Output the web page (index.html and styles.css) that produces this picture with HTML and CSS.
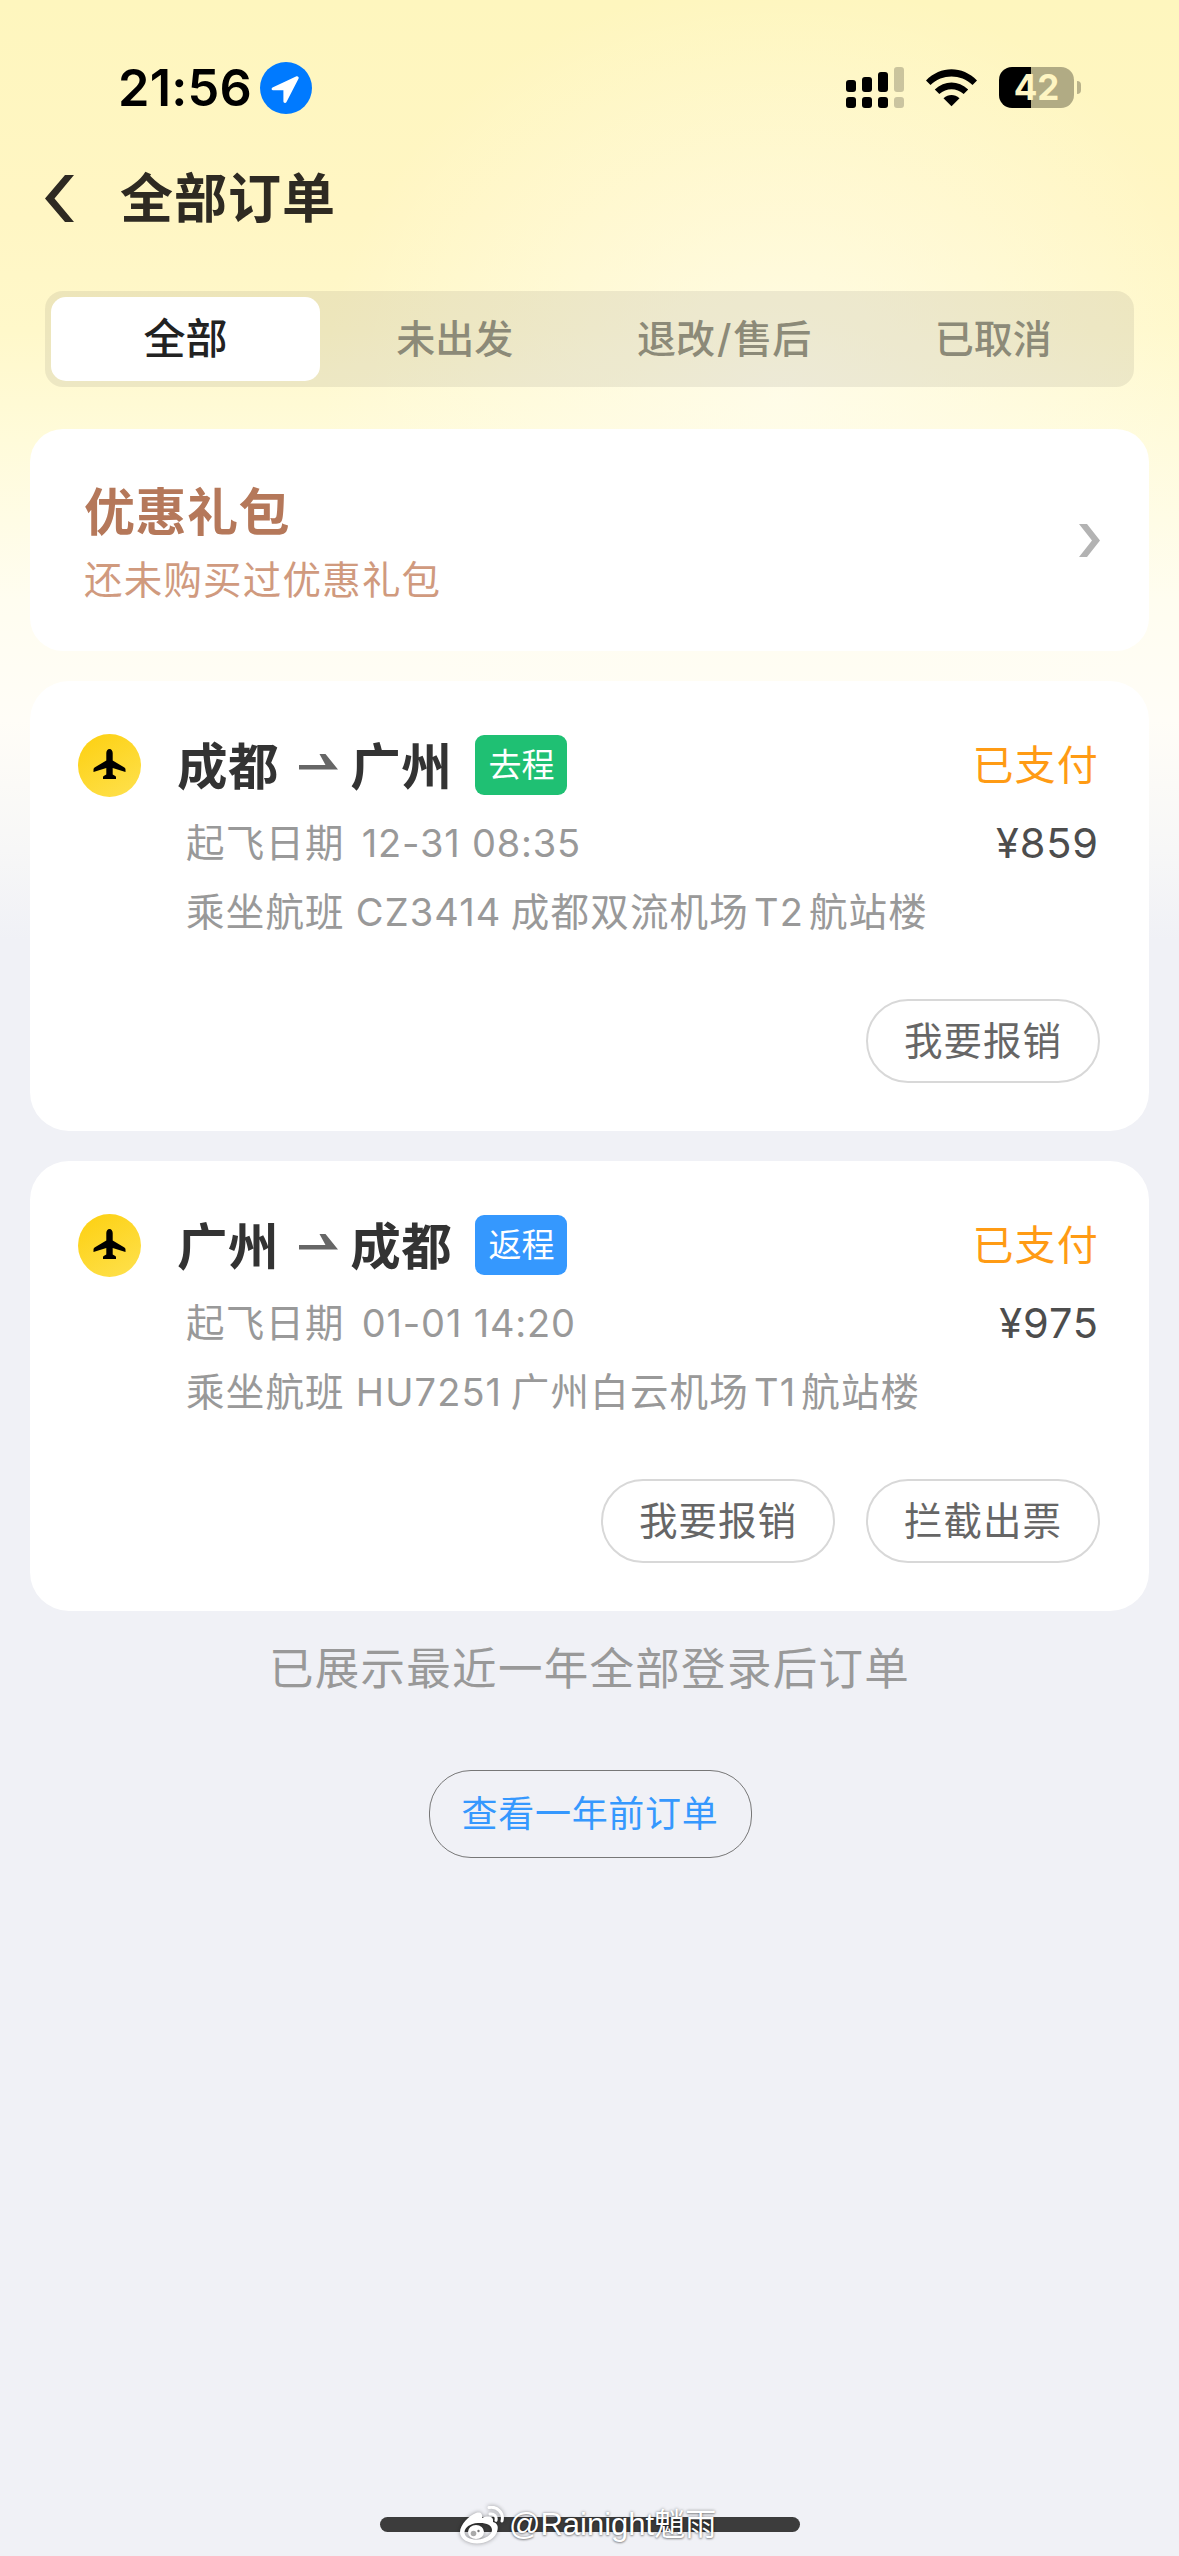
FILE: index.html
```html
<!DOCTYPE html>
<html lang="zh-CN">
<head>
<meta charset="utf-8">
<title>全部订单</title>
<link rel="stylesheet" href="styles.css">
</head>
<body>
<svg class="defs" width="0" height="0" aria-hidden="true">
  <defs>
    <linearGradient id="gold" x1="0.2" y1="0" x2="0.8" y2="1">
      <stop offset="0" stop-color="#fdd114"/><stop offset="1" stop-color="#fee04a"/>
    </linearGradient>
    <symbol id="plane" viewBox="0 0 63 63">
      <circle cx="31.5" cy="31.5" r="31.5" fill="url(#gold)"/>
      <path d="M31.5 15c1.900 0 3.200 1.800 3.200 4v7.500L46 33.300c1 .6 1.500 1.300 1.500 2.400v2.400l-12.800-4v6.400l2.600 1.500c.5.300.7.700.7 1.300V45H25v-1.700c0-.6.2-1 .7-1.300l2.600-1.500v-6.400l-12.800 4v-2.400c0-1.100.5-1.800 1.500-2.400l11.300-6.800V19c0-2.200 1.300-4 3.200-4z" fill="#000"/>
    </symbol>
    <symbol id="arrow" viewBox="0 0 39 16">
      <path d="M0 11h26.500L20.500 0h6L39 15.500H0z" fill="#666"/>
    </symbol>
  </defs>
</svg>
<div class="page">
  <header class="status-bar">
    <div class="clock">
      <span class="time">21:56</span>
      <svg class="location" viewBox="0 0 52 52"><circle cx="26" cy="26" r="26" fill="#007aff"/><path d="M36 14.600 12.500 25.400c-1.500.8-1 2.800.6 2.800h10.300v11c0 2 2.400 2.300 3.100.7L38.600 16.500c.6-1.500-1.100-2.700-2.600-1.900z" fill="#fff"/></svg>
    </div>
    <div class="indicators">
      <svg class="signal" viewBox="0 0 58 41">
        <rect x="0" y="13" width="10" height="12" rx="3"/><rect x="16" y="10" width="10" height="15" rx="3"/><rect x="32" y="5" width="10" height="20" rx="3"/>
        <rect x="0" y="30" width="10" height="11" rx="3"/><rect x="16" y="30" width="10" height="11" rx="3"/><rect x="32" y="30" width="10" height="11" rx="3"/>
        <g opacity=".2"><rect x="48" y="0" width="10" height="25" rx="3"/><rect x="48" y="30" width="10" height="11" rx="3"/></g>
      </svg>
      <svg class="wifi" viewBox="0 0 51 38">
        <path d="M0 11.500C14.500-3.500 36.500-3.500 51 11.500L46.500 16C34.500 4.800 16.500 4.800 4.500 16z"/>
        <path d="M8.800 20.500C18.500 11.300 32.500 11.300 42.200 20.500L37.700 25C30.500 18.600 20.500 18.600 13.300 25z"/>
        <path d="M17.500 29.200C22.500 25 28.500 25 33.500 29.200L25.500 37.200z"/>
      </svg>
      <div class="battery"><span class="level">42</span><i class="nub"></i></div>
    </div>
  </header>

  <nav class="nav-bar">
    <svg class="back" viewBox="0 0 29 47"><path d="M20 0h9L9.500 23.500 29 47h-9L0 23.500z" fill="#2e2a22"/></svg>
    <h1 class="nav-title">全部订单</h1>
  </nav>

  <div class="tabs">
    <a class="tab active">全部</a><a class="tab">未出发</a><a class="tab">退改<span class="slash">/</span>售后</a><a class="tab">已取消</a>
  </div>

  <main class="list">
    <section class="card gift">
      <div>
        <h2 class="gift-title">优惠礼包</h2>
        <p class="gift-note">还未购买过优惠礼包</p>
      </div>
      <svg class="chevron" viewBox="0 0 21 33"><path d="M0 0h8l13 16.500L8 33H0l13-16.500z" fill="#b3b3b3"/></svg>
    </section>

    <section class="card order">
      <div class="route">
        <svg class="plane"><use href="#plane"/></svg>
        <span class="city">成都</span><svg class="arrow"><use href="#arrow"/></svg><span class="city">广州</span>
        <span class="tag outbound">去程</span>
        <span class="state">已支付</span>
      </div>
      <div class="info date"><span>起飞日期</span><span class="latin when">12-31 08:35</span><span class="price">¥859</span></div>
      <div class="info flight"><span>乘坐航班</span><span class="latin number">CZ3414</span><span>成都双流机场</span><span class="latin terminal">T2</span><span>航站楼</span></div>
      <div class="actions"><button class="pill">我要报销</button></div>
    </section>

    <section class="card order">
      <div class="route">
        <svg class="plane"><use href="#plane"/></svg>
        <span class="city">广州</span><svg class="arrow"><use href="#arrow"/></svg><span class="city">成都</span>
        <span class="tag inbound">返程</span>
        <span class="state">已支付</span>
      </div>
      <div class="info date"><span>起飞日期</span><span class="latin when">01-01 14:20</span><span class="price">¥975</span></div>
      <div class="info flight"><span>乘坐航班</span><span class="latin number">HU7251</span><span>广州白云机场</span><span class="latin terminal">T1</span><span>航站楼</span></div>
      <div class="actions"><button class="pill">我要报销</button><button class="pill">拦截出票</button></div>
    </section>
  </main>

  <p class="end-note">已展示最近一年全部登录后订单</p>
  <button class="older">查看一年前订单</button>

  <footer class="home">
    <i class="home-bar"></i>
    <div class="watermark">
      <svg class="weibo" viewBox="0 0 44 38">
        <path fill-rule="evenodd" d="M16 7c4-1.500 7 .5 6 5 6-2.500 12-2 11 4 4 1 5.500 4 4.500 8C36 32 27 37.500 17 37.500 8 37.500 0 33 0 26 0 19 9 9.500 16 7zM18 17C10 17.500 4.500 21.500 4.500 26.500S11 34 18 33.500 32 29 32 24 26 16.500 18 17z" fill="#fff"/>
        <ellipse cx="16" cy="26" rx="8" ry="7" fill="#fff"/><circle cx="13.500" cy="27.500" r="2.800" fill="#aaa"/><circle cx="18.500" cy="25" r="1.200" fill="#777"/>
        <path d="M29 1.500C37.500 0 44 7 42 15M30 8c4-.6 7 2.400 6 6.400" fill="none" stroke="#fff" stroke-width="3" stroke-linecap="round"/>
      </svg>
      <span>@Rainight魈雨</span>
    </div>
  </footer>
</div>
</body>
</html>
```
FILE: styles.css
```css
* { box-sizing: border-box; }
body {
  margin: 0;
  background: #f0f1f6;
  font-family: Inter, "Noto Sans CJK SC", sans-serif;
}
h1, h2, p { margin: 0; }
svg { display: block; flex: none; }
.defs { position: absolute; }
button { padding: 0; background: none; font-family: inherit; }

.page {
  display: flex;
  flex-direction: column;
  height: 2556px;
  overflow: hidden;
  background:
    radial-gradient(ellipse 460px 420px at 780px 400px, rgba(255, 253, 240, .7), rgba(255, 253, 240, 0)),
    linear-gradient(#fef6be 0, #fff6c4 220px, #fff8ca 330px, #fffbda 440px, #fffdf0 600px, #fffdf7 720px, #f7f7f7 850px, #f0f1f6 940px);
}

.status-bar {
  display: flex;
  justify-content: space-between;
  height: 150px;
  padding: 0 98px 0 118px;
}
.clock { display: flex; gap: 9px; padding-top: 62px; height: 114px; }
.time { width: 133px; font-size: 50.500px; font-weight: 600; line-height: 52px; letter-spacing: .2px; white-space: nowrap; }
.location { width: 52px; height: 52px; }
.indicators { display: flex; padding-top: 67px; }
.signal { width: 58px; height: 41px; }
.wifi { width: 51px; height: 38px; margin: 2px 22px 0; }
.battery { display: flex; align-items: center; gap: 3px; height: 41px; }
.level {
  width: 75px; height: 41px; border-radius: 13px;
  background: linear-gradient(90deg, #000 32px, #b1ab84 32px);
  color: #fef5c2; font-size: 35px; font-weight: 700; line-height: 41px; text-align: center; letter-spacing: 0;
}
.nub { width: 4px; height: 13px; border-radius: 0 4px 4px 0; background: #b9b28a; }

.nav-bar { display: flex; align-items: center; gap: 46px; height: 96px; padding-left: 45px; }
.back { width: 29px; height: 47px; }
.nav-title { padding-top: 2px; font-size: 53px; font-weight: 600; line-height: 80px; letter-spacing: 1px; color: #2e2a22; }

.tabs {
  display: grid;
  grid-template-columns: repeat(4, 1fr);
  height: 96px;
  margin: 45px 45px 0;
  padding: 6px;
  border-radius: 18px;
  background: rgba(50, 50, 50, .085);
}
.tab { font-size: 39px; line-height: 84px; text-align: center; color: #8c8a78; font-weight: 500; }
.slash { padding: 0 2px; }
.active { border-radius: 15px; background: #fff; color: #222; font-size: 42px; font-weight: 500; }

.list { display: flex; flex-direction: column; gap: 30px; margin: 42px 30px 0; }
.card { border-radius: 39px; background: #fff; }
.gift { display: flex; justify-content: space-between; height: 222px; padding: 49px 49px 0 54px; border-radius: 33px; }
.gift-title { font-size: 51px; font-weight: 600; line-height: 70px; letter-spacing: .5px; color: #b5785a; }
.gift-note { font-size: 38.500px; line-height: 65px; letter-spacing: 1.200px; color: #d09a7e; }
.chevron { width: 21px; height: 33px; margin-top: 46px; }

.order { height: 450px; padding: 53px 49px 0 48px; }
.route { display: flex; align-items: center; height: 63px; }
.plane { width: 63px; height: 63px; margin-right: 36px; }
.city { padding-top: 3px; font-size: 50.500px; font-weight: 600; line-height: 60px; letter-spacing: .6px; color: #333; }
.arrow { width: 39px; height: 16px; margin: 0 12px 7px 20px; }
.city + .tag { margin: 0 0 1px 23px; }
.tag { width: 92px; height: 60px; border-radius: 9px; color: #fff; font-size: 33px; line-height: 60px; text-align: center; }
.outbound { background: #1fc073; }
.inbound { background: #3598fe; }
.state { margin: 0 1px 2px auto; font-size: 41px; line-height: 60px; letter-spacing: 1.200px; color: #ff9b14; }
.info { display: flex; align-items: center; padding-left: 108px; font-size: 38.500px; letter-spacing: 1.200px; line-height: 68px; color: #999; white-space: nowrap; }
.date { margin-top: 12px; }
.latin { font-size: 38px; letter-spacing: .8px; }
.when { margin-left: 17px; }
.price { margin: 0 1px 0 auto; font-size: 41.500px; letter-spacing: .9px; color: #4d4d4d; }
.number { width: 166px; padding-left: 11px; letter-spacing: 1.100px; }
.flight { padding-top: 1px; }
.terminal { padding: 0 5px; letter-spacing: 1.100px; }
.actions { display: flex; justify-content: flex-end; gap: 31px; margin-top: 53px; }
.pill { width: 234px; height: 84px; border: 2px solid #d8d8d8; border-radius: 42px; color: #666; font-size: 38.500px; letter-spacing: 1px; line-height: 76px; }

.end-note { margin-top: 25px; font-size: 44.500px; line-height: 66px; letter-spacing: 1.300px; text-align: center; color: #999; }
.older { align-self: center; width: 323px; height: 88px; margin: 68px 0 0 1px; border: 1px solid #777; border-radius: 42px; color: #3598fe; font-size: 36px; letter-spacing: .7px; line-height: 84px; }

.home { position: relative; display: flex; justify-content: center; margin-top: auto; height: 39px; }
.home-bar { width: 420px; height: 15px; border-radius: 8px; background: #3c3c3c; }
.watermark {
  position: absolute; left: 460px; top: -14px;
  display: flex; align-items: center; gap: 5px; height: 44px;
  font-family: "Liberation Sans", "Noto Sans CJK SC", sans-serif;
  font-size: 31px; line-height: 44px; color: #fff; white-space: nowrap;
  text-shadow: 0 0 3px rgba(0, 0, 0, .45), 0 1px 2px rgba(0, 0, 0, .3);
}
.weibo { width: 44px; height: 38px; filter: drop-shadow(0 0 2px rgba(0, 0, 0, .4)); }
```
